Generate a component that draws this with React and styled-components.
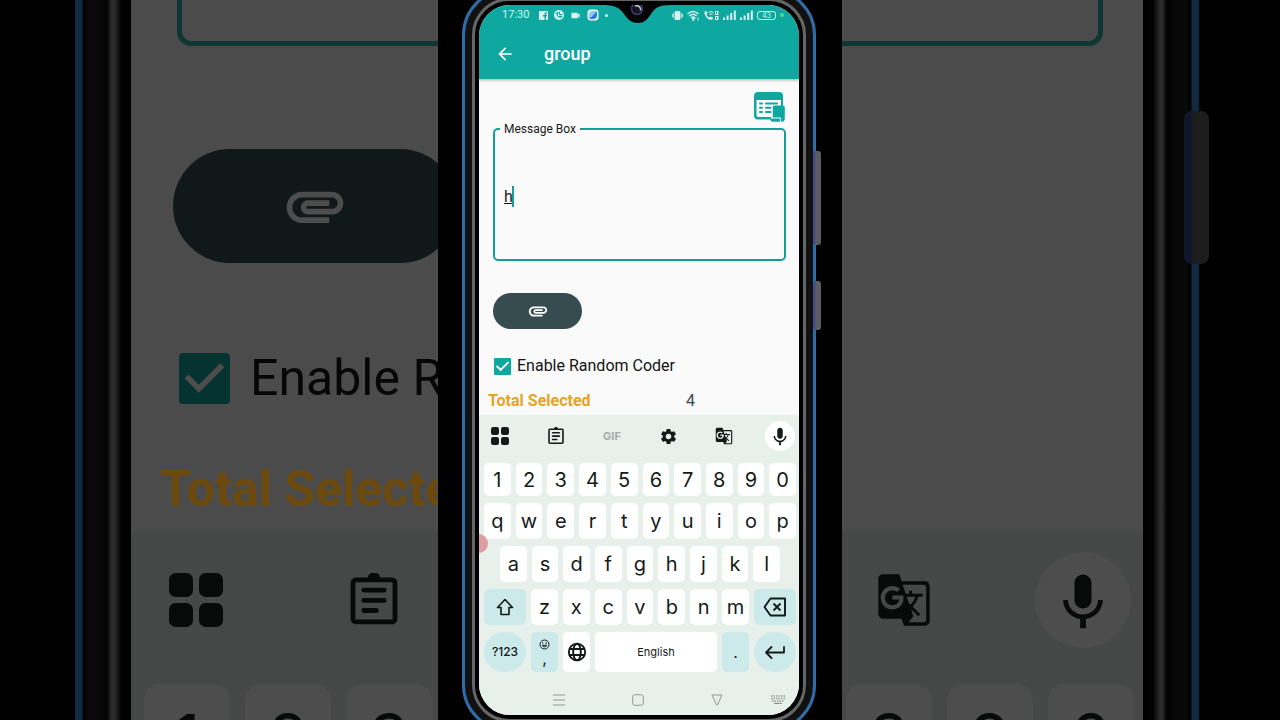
import React, { useState } from "react";
import styled, { createGlobalStyle, css } from "styled-components";
import {
  MdArrowBack,
  MdAttachment,
  MdGTranslate,
  MdKeyboardVoice,
  MdSettings,
  MdVideocam,
} from "react-icons/md";

const GlobalStyle = createGlobalStyle`
  *, *::before, *::after { box-sizing: border-box; }
  body {
    margin: 0;
    background: #000;
    font-family: Roboto, "Liberation Sans", sans-serif;
    overflow: hidden;
  }
  button { font: inherit; color: inherit; border: 0; padding: 0; background: none; cursor: pointer; }
  svg { display: block; }
`;

const teal = "#0fa8a0";
const ink = "#131a19";

const Stage = styled.main`
  display: grid;
  grid-template-columns: minmax(0, 1fr) 404px minmax(0, 1fr);
  height: 100vh;
  overflow: hidden;
`;

/* ---------- enlarged, dimmed copy behind the phone ---------- */

const Side = styled.div`
  display: flex;
  justify-content: ${(p) => (p.$left ? "flex-end" : "flex-start")};
  overflow: hidden;
  background: #000;
`;

const SideBezel = styled.div`
  position: relative;
  flex: none;
  width: 56px;
  background: linear-gradient(
    ${(p) => (p.$left ? "to right" : "to left")},
    #112941 0 7px,
    #020202 8px,
    #0a0a0a 14px,
    #080808 24px,
    #020202 32px,
    #2d2d2d 37px,
    #282828 40px,
    #020202 46px,
    #000 56px
  );
`;

const SidePower = styled.span`
  position: absolute;
  top: 111px;
  left: 41px;
  width: 25px;
  height: 153px;
  border-radius: 8px;
  background: linear-gradient(to right, #12162c 0 7px, #1d1d1d 9px);
`;

const SideScreen = styled.div`
  flex: none;
  display: flex;
  flex-direction: column;
  width: ${(p) => (p.$left ? "307px" : "301px")};
  overflow: hidden;
  background: #4b4b4b;
`;

const SideContent = styled.div`
  flex: none;
  height: 532px;
`;

const SideBox = styled.div`
  height: 46px;
  border: 0 solid #0e3733;
  border-bottom-width: 5px;
  ${(p) =>
    p.$left
      ? css`
          margin-left: 46px;
          border-left-width: 5px;
          border-bottom-left-radius: 14px;
        `
      : css`
          margin-right: 40px;
          border-right-width: 5px;
          border-bottom-right-radius: 14px;
        `}
`;

const SidePill = styled.div`
  display: grid;
  place-items: center;
  width: 284px;
  height: 114px;
  margin: 103px 0 0 42px;
  border-radius: 57px;
  background: #111819;
  color: #4d4d4d;
`;

const SideCheck = styled.div`
  display: flex;
  align-items: center;
  gap: 20px;
  height: 60px;
  margin: 85px 0 0 48px;
  font-size: 50px;
  line-height: 60px;
  white-space: nowrap;
  color: #060606;
`;

const SideTick = styled.span`
  flex: none;
  width: 51px;
  height: 51px;
  border-radius: 4px;
  background: #053430;
  color: #4d4d4d;
`;

const SideTotal = styled.div`
  margin: 51px 0 0 29px;
  font-size: 50px;
  line-height: 60px;
  font-weight: 700;
  white-space: nowrap;
  color: #6c4a0e;
`;

const SideKeyboard = styled.div`
  flex: 1;
  background: #454846;
  color: #070a09;
`;

const SideTools = styled.div`
  display: flex;
  align-items: center;
  justify-content: ${(p) => (p.$left ? "flex-start" : "space-between")};
  gap: ${(p) => (p.$left ? "124px" : "0")};
  height: 136px;
  padding: ${(p) => (p.$left ? "0 0 0 38px" : "0 12px 0 34px")};
`;

const SideMic = styled.span`
  display: grid;
  place-items: center;
  width: 96px;
  height: 96px;
  border-radius: 50%;
  background: #4d4d4d;
`;

const SideKeys = styled.div`
  display: flex;
  gap: 15px;
  padding: 16px 0 0 ${(p) => (p.$left ? "13px" : "4px")};
`;

const SideKey = styled.span`
  flex: none;
  width: 86px;
  height: 108px;
  border-radius: 16px;
  background: #4d4d4d;
  font: 67px/110px Inter, sans-serif;
  text-align: center;
`;

/* ---------- phone body ---------- */

const PhoneColumn = styled.div`
  display: flex;
  justify-content: center;
  height: 100vh;
  padding-right: 2px;
  overflow: hidden;
  background: #000;
`;

const Frame = styled.div`
  position: relative;
  width: 354px;
  height: calc(100% + 24px);
  margin: -12px 0;
  padding: 7px;
  border: 3px solid #2f6ca8;
  border-radius: 47px;
  background: #111;
`;

const Ring = styled.div`
  height: 100%;
  padding: 4px;
  border: 3px solid #666;
  border-radius: 37px;
  background: #000;
`;

const SideButton = styled.span`
  position: absolute;
  top: ${(p) => p.$top}px;
  right: -8px;
  width: 8px;
  height: ${(p) => p.$height}px;
  border-radius: 3px;
  background: linear-gradient(to right, #424c8c 0 2px, #5b5d60 3px);
`;

const Screen = styled.div`
  position: relative;
  display: flex;
  flex-direction: column;
  height: 100%;
  border-radius: 31px;
  overflow: hidden;
  background: #fafafa;
`;

const Notch = styled.svg`
  position: absolute;
  z-index: 2;
  top: -5px;
  left: 50%;
  width: 70px;
  height: 28px;
  margin-left: -37px;
`;

const TopArea = styled.header`
  position: relative;
  z-index: 1;
  background: ${teal};
  color: #fff;
  box-shadow: 0 1px 3px rgba(0, 0, 0, 0.35);
`;

const StatusBar = styled.div`
  display: flex;
  align-items: center;
  justify-content: space-between;
  height: 20px;
  padding: 0 15px 0 23px;
  color: #d5f3f0;
`;

const StatusGroup = styled.div`
  display: flex;
  align-items: center;
  gap: ${(p) => p.$gap}px;
`;

const Clock = styled.span`
  margin-right: 4px;
  font: 11px/20px Roboto, sans-serif;
`;

const Battery = styled.span`
  width: 19px;
  height: 9px;
  border: 1px solid currentColor;
  border-radius: 3px;
  font: 7px/7px Inter, sans-serif;
  text-align: center;
`;

const Dot = styled.span`
  width: ${(p) => p.$size}px;
  height: ${(p) => p.$size}px;
  border-radius: 50%;
  background: ${(p) => p.$color};
`;

const AppBar = styled.div`
  display: flex;
  align-items: center;
  gap: 29px;
  height: 54px;
  padding: 4px 16px 0;
`;

const IconButton = styled.button`
  display: grid;
  place-items: center;
`;

const Title = styled.h1`
  margin: 0;
  font-size: 18px;
  line-height: 26px;
  font-weight: 500;
`;

const Content = styled.section`
  display: flex;
  flex-direction: column;
  align-items: flex-start;
  flex: 1;
  padding: 13px 13px 0 14px;
`;

const TemplateButton = styled(IconButton)`
  align-self: flex-end;
`;

const Field = styled.div`
  position: relative;
  width: 100%;
  margin-top: 6px;
`;

const FieldLabel = styled.label`
  position: absolute;
  top: -8px;
  left: 7px;
  padding: 0 4px;
  background: #fafafa;
  font-size: 12px;
  line-height: 19px;
  color: #1b1b1b;
`;

const MessageInput = styled.textarea`
  display: block;
  width: 100%;
  height: 133px;
  padding: 57px 9px 8px;
  border: 2px solid #12a096;
  border-radius: 5px;
  outline: 0;
  resize: none;
  background: transparent;
  font: 16px/20px Roboto, "Liberation Sans", sans-serif;
  text-decoration: underline;
  color: #1b1b1b;
`;

const Caret = styled.span`
  position: absolute;
  top: 58px;
  left: 19px;
  width: 2px;
  height: 21px;
  background: #12a096;
`;

const AttachButton = styled.button`
  display: grid;
  place-items: center;
  width: 89px;
  height: 36px;
  margin-top: 32px;
  border-radius: 18px;
  background: #374c4f;
  color: #fff;
`;

const CheckRow = styled.label`
  display: flex;
  align-items: center;
  gap: 6px;
  margin: 27px 0 0 1px;
  font-size: 16px;
  line-height: 20px;
  white-space: nowrap;
  color: #141414;
`;

const CheckCell = styled.span`
  display: grid;
  width: 17px;
  height: 17px;
  color: #fff;
  & > * { grid-area: 1 / 1; }
`;

const Checkbox = styled.input`
  appearance: none;
  width: 17px;
  height: 17px;
  margin: 0;
  border-radius: 1px;
  background: ${teal};
`;

const TickMark = styled.svg`
  position: relative;
  width: 100%;
  height: 100%;
  pointer-events: none;
`;

const TotalRow = styled.p`
  display: grid;
  grid-template-columns: 198px auto;
  margin: 15px 0 0 -5px;
  font-size: 16px;
  line-height: 20px;
  color: #37474f;
`;

const TotalLabel = styled.b`
  color: #e5a425;
`;

/* ---------- keyboard ---------- */

const Keyboard = styled.section`
  position: relative;
  padding: 0 3px 0 5px;
  background: #e7f0ea;
  color: ${ink};
`;

const Tools = styled.div`
  display: flex;
  align-items: center;
  justify-content: space-between;
  height: 42px;
  padding: 0 1px;
`;

const Tool = styled(IconButton)`
  width: 30px;
  height: 30px;
  border-radius: 50%;
  background: ${(p) => (p.$raised ? "#fff" : "none")};
  font: 700 11px/16px Inter, sans-serif;
  color: ${(p) => (p.$muted ? "#a3aca8" : ink)};
`;

const KeyRows = styled.div`
  display: grid;
  grid-template-rows: 33px repeat(3, 36px) 40px;
  gap: 7px;
  padding-top: 6px;
`;

const columns = {
  ten: "repeat(10, minmax(0, 1fr))",
  nine: "repeat(9, minmax(0, 1fr))",
  shift: "42px repeat(7, minmax(0, 1fr)) 42px",
  space: "42px 27px 27px minmax(0, 1fr) 27px 42px",
};

const KeyRow = styled.div`
  display: grid;
  grid-template-columns: ${(p) => columns[p.$kind]};
  gap: 5px;
  padding: 0 ${(p) => (p.$kind === "nine" ? "16px" : "0")};
`;

const Key = styled.button`
  display: flex;
  flex-direction: column;
  align-items: center;
  justify-content: center;
  border-radius: ${(p) => (p.$round ? "50%" : "5px")};
  background: ${(p) => (p.$tinted ? "#cdeaeb" : "#fff")};
  font-family: Inter, sans-serif;
  font-size: ${(p) => p.$size || 20}px;
  font-weight: ${(p) => (p.$medium ? 500 : 400)};
  line-height: ${(p) => (p.$size ? "16px" : "24px")};
`;

const NavBar = styled.nav`
  display: grid;
  grid-template-columns: 40px repeat(3, 79px) minmax(0, 1fr);
  align-items: center;
  height: 43px;
  padding-top: 12px;
  margin: 0 -3px 0 -5px;
  color: #8f9794;
`;

const NavButton = styled(IconButton)`
  grid-column: ${(p) => p.$col};
`;

const TouchDot = styled.span`
  position: absolute;
  top: 119px;
  left: -10px;
  width: 19px;
  height: 19px;
  border-radius: 50%;
  background: #dc9da1;
`;

/* ---------- icons ---------- */

const Tick = () => (
  <TickMark viewBox="3 3 18 18" fill="currentColor">
    <path d="M10 17l-5-5 1.41-1.41L10 14.17l7.59-7.59L19 8l-9 9z" />
  </TickMark>
);

const GridIcon = ({ size }) => (
  <svg width={size} height={size} viewBox="0 0 18 18" fill="currentColor">
    <rect width="8" height="8" rx="2.2" />
    <rect x="10" width="8" height="8" rx="2.2" />
    <rect y="10" width="8" height="8" rx="2.2" />
    <rect x="10" y="10" width="8" height="8" rx="2.2" />
  </svg>
);

const ClipboardIcon = ({ size }) => (
  <svg width={size} height={size} viewBox="0 0 18 18" fill="none" stroke="currentColor" strokeWidth="1.6" strokeLinecap="round">
    <rect x="2" y="2.3" width="14" height="14" rx="1" />
    <path d="M5.6 5.7h6.8M5.6 9.1h6.8M5.6 12.500h4.2" />
    <path d="M7.300 2a1.700 1.700 0 0 1 3.400 0z" fill="currentColor" strokeWidth="1" />
  </svg>
);

const TemplateIcon = () => (
  <svg width="32" height="30" viewBox="0 0 32 30" fill={teal}>
    <path d="M4 0h21a4 4 0 0 1 4 4v10h-2V8H2.500v15a2 2 0 0 0 2 2H17v2.500H4a4 4 0 0 1-4-4V4a4 4 0 0 1 4-4z" />
    <rect x="5" y="10.500" width="4" height="2" rx="1" />
    <rect x="11" y="10.500" width="13" height="2" rx="1" />
    <rect x="5" y="14.800" width="4" height="2" rx="1" />
    <rect x="11" y="14.800" width="6.500" height="2" rx="1" />
    <rect x="5" y="19" width="4" height="2" rx="1" />
    <rect x="11" y="19" width="6.500" height="2" rx="1" />
    <path d="M20 13.500h9a1.800 1.800 0 0 1 1.800 1.800v11.500a3 3 0 0 1-3 3h-1v-4.300h-8V15a1.500 1.500 0 0 1 1.200-1.500z" />
    <path d="M16.500 26.500h9.500v3.300h-7.500a2 2 0 0 1-2-2z" />
  </svg>
);

const FacebookIcon = () => (
  <svg width="9" height="9" viewBox="0 0 18 18">
    <rect width="18" height="18" rx="2" fill="currentColor" />
    <path d="M11 18v-7H8V8h3V6c0-2 1-3.500 3.500-3.500H16v3h-1.300c-.8 0-1 .3-1 1V8H16l-.4 3h-1.900v7z" fill={teal} />
  </svg>
);

const CallBubbleIcon = () => (
  <svg width="10" height="10" viewBox="0 0 20 20">
    <circle cx="10" cy="10" r="10" fill="currentColor" />
    <path d="M5 4l3 0 1 4-2 1c1 2 2 3 4 4l1-2 4 1v3c-6 3-13-4-11-11z" fill={teal} />
    <path d="M11 3v6h6" fill="none" stroke={teal} strokeWidth="2" />
  </svg>
);

const BrowserIcon = () => (
  <svg width="12" height="12" viewBox="0 0 24 24">
    <rect x="1" y="1" width="22" height="22" rx="6" fill="#e9f6ff" />
    <path d="M20 4v8a8 8 0 0 1-8 8H4z" fill="#2677e0" />
    <path d="M4 12a8 8 0 0 1 8-8h8L4 20z" fill="#8cc7f7" />
  </svg>
);

const VibrateIcon = () => (
  <svg width="11" height="11" viewBox="0 0 24 22" fill="currentColor">
    <rect x="6" y="1" width="12" height="20" rx="2" />
    <path d="M3 5h2v12H3zM19 5h2v12h-2zM0 8h2v6H0zM22 8h2v6h-2z" />
  </svg>
);

const WifiIcon = () => (
  <svg width="13" height="11" viewBox="0 0 26 22" fill="none" stroke="currentColor" strokeWidth="2.600">
    <path d="M1 8q11-10 22 0M4.500 12q7.500-7 15 0M8 16q4-4 8 0" />
    <path d="M12 17l3 0-3 4z" fill="currentColor" />
    <path d="M22 15v6" strokeWidth="2" />
  </svg>
);

const WifiCallIcon = () => (
  <svg width="15" height="11" viewBox="0 0 30 22" fill="currentColor">
    <path d="M1 3l4-1 2 5-2 2c1 3 3 5 6 6l2-2 5 2-1 4C9 22 0 12 1 3z" />
    <path d="M9 5q5-4 10 0M11 9q3-2.500 6 0" fill="none" stroke="currentColor" strokeWidth="2" />
    <path d="M22 2h7v8h-7zM22 12h7v8h-7z" />
    <path d="M25 4v4M25 14v4" stroke={teal} strokeWidth="2" />
  </svg>
);

const SignalIcon = () => (
  <svg width="13" height="10" viewBox="0 0 13 10" fill="currentColor">
    <path d="M0 7.500h2V10H0zM3.600 5.500h2V10h-2zM7.200 3h2v7h-2zM10.800.5h2V10h-2z" />
  </svg>
);

const ShiftIcon = () => (
  <svg width="18" height="18" viewBox="0 0 18 18" fill="none" stroke="currentColor" strokeWidth="1.600" strokeLinejoin="round">
    <path d="M9 1.500L1.500 9.500H5v7h8v-7h3.500z" />
  </svg>
);

const BackspaceIcon = () => (
  <svg width="24" height="20" viewBox="0 0 24 20" fill="none" stroke="currentColor" strokeWidth="1.900" strokeLinejoin="round">
    <path d="M7.500 1.500h14.500v17H7.500L1.500 10z" />
    <path d="M10.500 6.500l7 7M17.500 6.500l-7 7" />
  </svg>
);

const EnterIcon = () => (
  <svg width="22" height="16" viewBox="0 0 22 16" fill="none" stroke="currentColor" strokeWidth="1.800" strokeLinecap="round" strokeLinejoin="round">
    <path d="M20 3v5.500H2M7.500 3L2 8.500 7.500 14" />
  </svg>
);

const GlobeIcon = () => (
  <svg width="20" height="20" viewBox="0 0 20 20" fill="none" stroke="currentColor" strokeWidth="1.900">
    <circle cx="10" cy="10" r="8.200" />
    <ellipse cx="10" cy="10" rx="3.800" ry="8.200" />
    <path d="M2.500 7h15M2.500 13h15" />
  </svg>
);

const SmileIcon = () => (
  <svg width="11" height="11" viewBox="0 0 22 22" fill="none" stroke="currentColor" strokeWidth="2">
    <circle cx="11" cy="11" r="9" />
    <path d="M6.500 12.500a4.800 4.800 0 0 0 9 0z" />
    <path d="M7.500 6.500v3M14.500 6.500v3" />
  </svg>
);

const KeyboardIcon = () => (
  <svg width="14" height="9" viewBox="0 0 14 9" stroke="currentColor" fill="none">
    <path d="M0 1h14M0 3.500h14M1 6h12" strokeWidth="1.300" strokeDasharray="1.400 1.120" />
    <path d="M3 8.300h8" strokeWidth="1.200" />
  </svg>
);

const CharKeys = ({ chars }) => [...chars].map((c) => <Key key={c}>{c}</Key>);

function PhoneKeyboard() {
  return (
    <Keyboard aria-label="Keyboard">
      <Tools>
        <Tool aria-label="More"><GridIcon size={18} /></Tool>
        <Tool aria-label="Clipboard"><ClipboardIcon size={18} /></Tool>
        <Tool $muted>GIF</Tool>
        <Tool aria-label="Settings"><MdSettings size={19} /></Tool>
        <Tool aria-label="Translate"><MdGTranslate size={18} /></Tool>
        <Tool aria-label="Voice input" $raised><MdKeyboardVoice size={22} /></Tool>
      </Tools>
      <KeyRows>
        <KeyRow $kind="ten"><CharKeys chars="1234567890" /></KeyRow>
        <KeyRow $kind="ten"><CharKeys chars="qwertyuiop" /></KeyRow>
        <KeyRow $kind="nine"><CharKeys chars="asdfghjkl" /></KeyRow>
        <KeyRow $kind="shift">
          <Key $tinted aria-label="Shift"><ShiftIcon /></Key>
          <CharKeys chars="zxcvbnm" />
          <Key $tinted aria-label="Backspace"><BackspaceIcon /></Key>
        </KeyRow>
        <KeyRow $kind="space">
          <Key $tinted $round $medium $size={12}>?123</Key>
          <Key $tinted $size={16}><SmileIcon />,</Key>
          <Key aria-label="Language"><GlobeIcon /></Key>
          <Key $size={11}>English</Key>
          <Key $tinted $size={16}>.</Key>
          <Key $tinted $round aria-label="Enter"><EnterIcon /></Key>
        </KeyRow>
      </KeyRows>
      <NavBar>
        <NavButton $col={2} aria-label="Recent apps">
          <svg width="12" height="12" viewBox="0 0 12 12" stroke="currentColor"><path d="M0 1h12M0 6h12M0 11h12" /></svg>
        </NavButton>
        <NavButton $col={3} aria-label="Home">
          <svg width="12" height="12" viewBox="0 0 12 12" fill="none" stroke="currentColor"><rect x=".7" y=".7" width="10.600" height="10.600" rx="2.500" /></svg>
        </NavButton>
        <NavButton $col={4} aria-label="Back">
          <svg width="12" height="12" viewBox="0 0 12 12" fill="none" stroke="currentColor" strokeLinejoin="round"><path d="M1 1h10L6.500 10.800h-1z" /></svg>
        </NavButton>
        <NavButton $col={5} aria-label="Switch keyboard"><KeyboardIcon /></NavButton>
      </NavBar>
      <TouchDot />
    </Keyboard>
  );
}

function Phone() {
  const [message, setMessage] = useState("h");
  const [random, setRandom] = useState(true);
  return (
    <Frame>
      <Ring>
        <Screen>
          <TopArea>
            <StatusBar>
              <StatusGroup $gap={6}>
                <Clock>17:30</Clock>
                <FacebookIcon />
                <CallBubbleIcon />
                <MdVideocam size={11} />
                <BrowserIcon />
                <Dot $size={3} $color="#d5f3f0" />
              </StatusGroup>
              <StatusGroup $gap={4}>
                <VibrateIcon />
                <WifiIcon />
                <WifiCallIcon />
                <SignalIcon />
                <SignalIcon />
                <Battery>43</Battery>
                <Dot $size={4} $color="#41e58a" />
              </StatusGroup>
            </StatusBar>
            <AppBar>
              <IconButton aria-label="Back"><MdArrowBack size={20} /></IconButton>
              <Title>group</Title>
            </AppBar>
          </TopArea>
          <Content>
            <TemplateButton aria-label="Templates"><TemplateIcon /></TemplateButton>
            <Field>
              <MessageInput id="message" value={message} spellCheck={false} onChange={(e) => setMessage(e.target.value)} />
              <FieldLabel htmlFor="message">Message Box</FieldLabel>
              <Caret />
            </Field>
            <AttachButton aria-label="Attach file"><MdAttachment size={22} /></AttachButton>
            <CheckRow>
              <CheckCell>
                <Checkbox type="checkbox" checked={random} onChange={(e) => setRandom(e.target.checked)} />
                {random && <Tick />}
              </CheckCell>
              Enable Random Coder
            </CheckRow>
            <TotalRow>
              <TotalLabel>Total Selected</TotalLabel>
              <span>4</span>
            </TotalRow>
          </Content>
          <PhoneKeyboard />
          <Notch viewBox="0 0 70 28">
            <path d="M0 5V0h70v5C56 5 53 8 49 14C45 20 42 23 36 23S26 20 22 14C17 7 12 5 0 5z" fill="#050505" />
            <circle cx="35" cy="9" r="5.500" fill="#15151d" stroke="#3a3878" strokeWidth="1.500" />
            <path d="M33 6a4 4 0 0 1 5.500 4.500" fill="none" stroke="#c4c4cc" strokeWidth="1.500" />
          </Notch>
        </Screen>
      </Ring>
      <SideButton $top={160} $height={94} />
      <SideButton $top={290} $height={49} />
    </Frame>
  );
}

export default function App() {
  return (
    <>
      <GlobalStyle />
      <Stage>
        <Side $left aria-hidden="true">
          <SideBezel $left />
          <SideScreen $left>
            <SideContent>
              <SideBox $left />
              <SidePill><MdAttachment size={68} /></SidePill>
              <SideCheck>
                <SideTick><Tick /></SideTick>
                Enable R
              </SideCheck>
              <SideTotal>Total Selecte</SideTotal>
            </SideContent>
            <SideKeyboard>
              <SideTools $left>
                <GridIcon size={54} />
                <ClipboardIcon size={54} />
              </SideTools>
              <SideKeys $left>
                <SideKey>1</SideKey>
                <SideKey>2</SideKey>
                <SideKey>3</SideKey>
              </SideKeys>
            </SideKeyboard>
          </SideScreen>
        </Side>
        <PhoneColumn>
          <Phone />
        </PhoneColumn>
        <Side aria-hidden="true">
          <SideScreen>
            <SideContent>
              <SideBox />
            </SideContent>
            <SideKeyboard>
              <SideTools>
                <MdGTranslate size={56} />
                <SideMic><MdKeyboardVoice size={68} /></SideMic>
              </SideTools>
              <SideKeys>
                <SideKey>8</SideKey>
                <SideKey>9</SideKey>
                <SideKey>0</SideKey>
              </SideKeys>
            </SideKeyboard>
          </SideScreen>
          <SideBezel>
            <SidePower />
          </SideBezel>
        </Side>
      </Stage>
    </>
  );
}
